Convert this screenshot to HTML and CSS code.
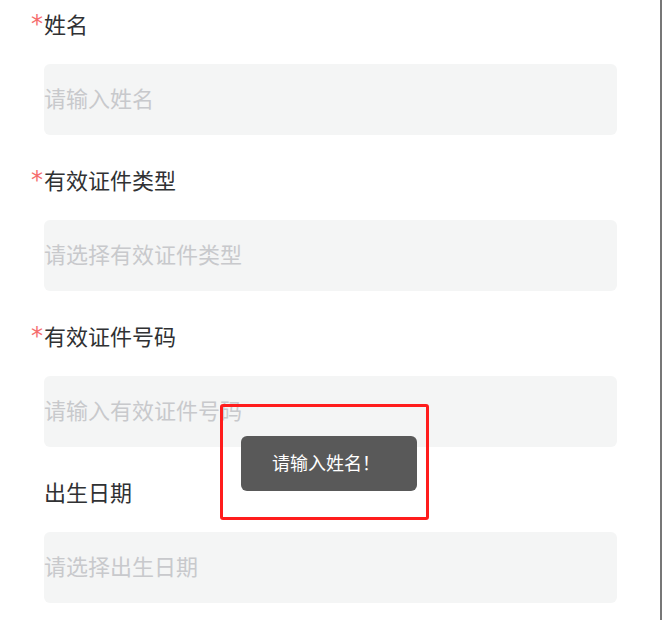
FILE: index.html
```
<!DOCTYPE html>
<html lang="zh-CN">
<head>
  <meta charset="UTF-8">
  <meta name="viewport" content="width=device-width, initial-scale=1.0">
  <title>信息填写</title>
  <link rel="stylesheet" href="styles.css">
</head>
<body>

<div class="page">
  <form class="form">
    <div class="field">
      <div class="label"><span class="req">*</span>姓名</div>
      <input class="input" type="text" placeholder="请输入姓名">
    </div>

    <div class="field">
      <div class="label"><span class="req">*</span>有效证件类型</div>
      <input class="input" type="text" placeholder="请选择有效证件类型" readonly>
    </div>

    <div class="field">
      <div class="label"><span class="req">*</span>有效证件号码</div>
      <input class="input" type="text" placeholder="请输入有效证件号码">
    </div>

    <div class="field">
      <div class="label">出生日期</div>
      <input class="input" type="text" placeholder="请选择出生日期" readonly>
    </div>
  </form>

  <!-- 提示框 + 标注框 -->
  <div class="mark">
    <div class="toast">请输入姓名！</div>
  </div>
</div>

</body>
</html>
```

FILE: styles.css
```
* {
  margin: 0;
  padding: 0;
  box-sizing: border-box;
  font-family: "Noto Sans CJK SC", "Noto Sans", sans-serif;
}

body {
  background: #fff;
  overflow: hidden;
  height: 100vh;
}

.page {
  position: relative;
  width: 662px;
  height: 620px;
  border-right: 2px solid #777;
}

.form {
  padding: 8px 43px 0 44px;
}

.field {
  margin-bottom: 29px;
}

.label {
  height: 30px;
  font-size: 22px;
  line-height: 30px;
  color: #303133;
  margin-bottom: 26px;
}

.req {
  display: inline-block;
  vertical-align: top;
  width: 13px;
  height: 30px;
  margin-left: -13px;
  font-family: "DejaVu Sans", sans-serif;
  font-size: 24px;
  line-height: 32px;
  color: #f56c6c;
}

.input {
  display: block;
  width: 100%;
  height: 71px;
  border: none;
  outline: none;
  border-radius: 6px;
  background: #f4f5f5;
  font-size: 22px;
  color: #333;
  padding: 0 0 6px 0;
}

.input::placeholder {
  color: #c8c9cc;
}

.mark {
  position: absolute;
  left: 220px;
  top: 404px;
  width: 209px;
  height: 116px;
  border: 3px solid #ff1c1c;
  border-radius: 3px;
  padding: 29px 0 0 18px;
}

.toast {
  display: inline-block;
  height: 55px;
  line-height: 53px;
  padding: 0 37px 0 31px;
  background: #595959;
  border-radius: 6px;
  color: #fff;
  font-size: 18px;
  white-space: nowrap;
}
```
